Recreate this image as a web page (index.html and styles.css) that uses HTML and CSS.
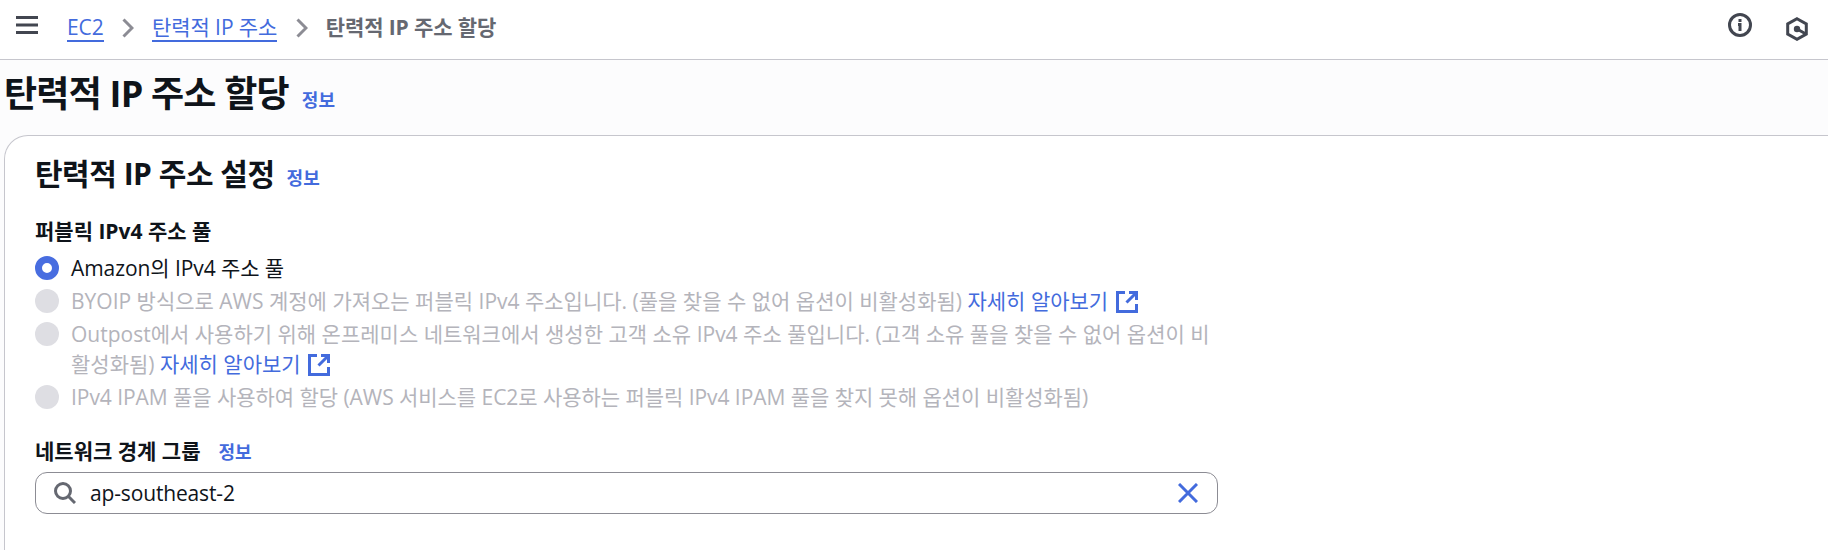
FILE: index.html
```
<!DOCTYPE html>
<html lang="ko">
<head>
<meta charset="utf-8">
<title>탄력적 IP 주소 할당</title>
<link rel="stylesheet" href="styles.css">
</head>
<body>
<header class="topbar">
  <svg class="menu" viewBox="0 0 22 18"><path d="M0 1.5h22M0 9h22M0 16.5h22"/></svg>
  <nav class="crumbs">
    <a class="crumb" href="#">EC2</a>
    <svg class="chevron" viewBox="0 0 12 20"><path d="M1.5 1.5 10 10 1.5 18.5"/></svg>
    <a class="crumb" href="#">탄력적 IP 주소</a>
    <svg class="chevron" viewBox="0 0 12 20"><path d="M1.5 1.5 10 10 1.5 18.5"/></svg>
    <span class="current">탄력적 IP 주소 할당</span>
  </nav>
  <div class="tools">
    <svg class="tool-info" viewBox="0 0 24 24"><circle cx="12" cy="12" r="10.5"/><path d="M12 6v3M10 11.5h2V18"/></svg>
    <svg class="tool-hex" viewBox="0 0 24 24"><path d="M12 1.700 21.300 6.900v10.200L12 22.300 2.700 17.100V6.900z"/><path d="m12 12 9 5"/><circle cx="12" cy="12" r="3.200"/></svg>
  </div>
</header>
<main>
  <div class="page-title"><h1>탄력적 IP 주소 할당</h1><a class="info" href="#">정보</a></div>
  <section class="panel">
    <div class="panel-title"><h2>탄력적 IP 주소 설정</h2><a class="info" href="#">정보</a></div>
    <div class="label">퍼블릭 IPv4 주소 풀</div>
    <div class="options">
      <div class="option selected"><span class="radio"></span><span>Amazon의 IPv4 주소 풀</span></div>
      <div class="option"><span class="radio"></span><span>BYOIP 방식으로 AWS 계정에 가져오는 퍼블릭 IPv4 주소입니다. (풀을 찾을 수 없어 옵션이 비활성화됨) <a href="#">자세히 알아보기 <svg class="external" viewBox="0 0 22 22"><path d="M9 1.5H1.5v19h19V13M13 1.5h7.500V9M20 2 10.500 11.500"/></svg></a></span></div>
      <div class="option"><span class="radio"></span><span>Outpost에서 사용하기 위해 온프레미스 네트워크에서 생성한 고객 소유 IPv4 주소 풀입니다. (고객 소유 풀을 찾을 수 없어 옵션이 비<br>활성화됨) <a href="#">자세히 알아보기 <svg class="external" viewBox="0 0 22 22"><path d="M9 1.5H1.5v19h19V13M13 1.5h7.500V9M20 2 10.500 11.500"/></svg></a></span></div>
      <div class="option ipam"><span class="radio"></span><span>IPv4 IPAM 풀을 사용하여 할당 (AWS 서비스를 EC2로 사용하는 퍼블릭 IPv4 IPAM 풀을 찾지 못해 옵션이 비활성화됨)</span></div>
    </div>
    <div class="label group-label"><span>네트워크 경계 그룹</span><a class="info" href="#">정보</a></div>
    <div class="search">
      <svg class="lens" viewBox="0 0 22 22"><circle cx="9" cy="9" r="7.500"/><path d="m14.500 14.500 6.500 6.500"/></svg>
      <span class="value">ap-southeast-2</span>
      <svg class="clear" viewBox="0 0 20 20"><path d="m1 1 18 18M19 1 1 19"/></svg>
    </div>
  </section>
</main>
</body>
</html>
```
FILE: styles.css
```
* { box-sizing: border-box; }
body {
  margin: 0;
  height: 550px;
  overflow: hidden;
  background: #fcfcfd;
  color: #0f141a;
  font: 21px/30px "Open Sans", "Noto Sans CJK KR", sans-serif;
}
a { color: #436bdd; text-decoration: none; }
svg { fill: none; stroke: currentColor; stroke-width: 3; flex: none; }
h1, h2 { margin: 0; font-weight: 700; white-space: nowrap; }
.topbar {
  display: flex;
  height: 60px;
  padding: 0 19px 0 16px;
  background: #fff;
  border-bottom: 1px solid #c6c6cd;
  color: #424650;
}
.menu { width: 22px; height: 18px; margin-top: 16px; }
.crumbs { display: flex; align-items: flex-start; margin-left: 29px; padding-top: 12px; white-space: nowrap; letter-spacing: -0.1px; }
.crumb { height: 30px; border-bottom: 2px solid #436bdd; }
.chevron { width: 12px; height: 20px; margin: 6px 18px 0 18.500px; color: #8c8c94; }
.current { color: #656871; font-weight: 700; }
.tools { display: flex; gap: 33px; margin-left: auto; }
.tool-info, .tool-hex { width: 24px; height: 24px; }
.tool-info { margin-top: 13px; }
.tool-hex { margin-top: 17px; }
.tool-hex circle { fill: currentColor; stroke: none; }
.info { font-size: 18px; font-weight: 700; line-height: 24px; }
.page-title { display: flex; align-items: baseline; gap: 13px; height: 75px; padding: 11px 0 0 4px; }
h1 { font-size: 36px; line-height: 45px; letter-spacing: -0.8px; }
.panel {
  height: 415px;
  margin: 0 -30px 0 4px;
  padding: 20px 30px 0;
  background: #fff;
  border: 1px solid #c6c6cd;
  border-bottom: 0;
  border-radius: 24px 24px 0 0;
}
.panel-title { display: flex; align-items: baseline; gap: 12px; height: 60px; }
h2 { font-size: 30px; line-height: 36px; letter-spacing: -0.48px; }
.label { font-weight: 700; }
.options { display: flex; flex-direction: column; gap: 3px; margin-top: 7px; }
.option { display: flex; gap: 12px; color: #b4b4bb; white-space: nowrap; }
.option.selected { color: #0f141a; letter-spacing: -0.08px; }
.option.ipam { letter-spacing: -0.05px; }
.radio { flex: none; width: 24px; height: 24px; margin-top: 3px; border-radius: 50%; background: #dedee3; }
.selected .radio { background: #fff; border: 7px solid #486de0; }
.external { width: 22px; height: 22px; margin-left: 2px; vertical-align: -4px; }
.group-label { display: flex; align-items: baseline; gap: 18px; margin-top: 24px; }
.search {
  display: flex;
  align-items: center;
  width: 1183px;
  height: 42px;
  margin-top: 6px;
  padding: 0 19px 0 18px;
  border: 1px solid #8c8c94;
  border-radius: 12px;
}
.lens { width: 22px; height: 22px; color: #656871; }
.value { margin-left: 14px; letter-spacing: -0.15px; }
.clear { width: 20px; height: 20px; margin-left: auto; color: #436bdd; }
```
